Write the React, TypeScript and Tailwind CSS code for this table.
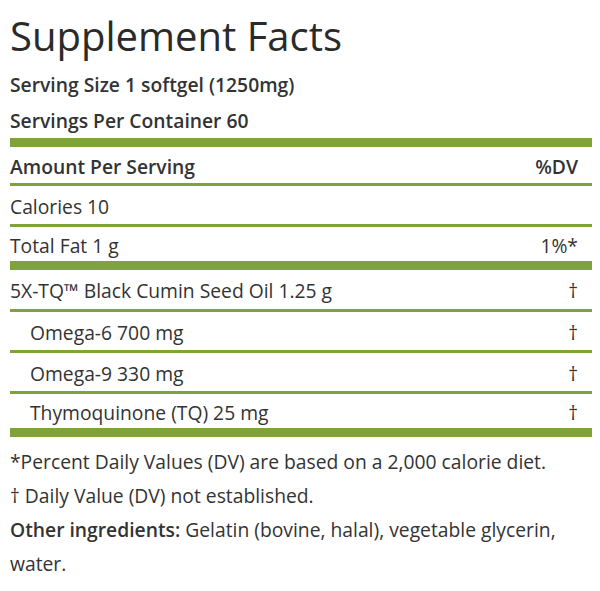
import React from 'react';

const rows = [
  { label: 'Calories 10', dv: '', indent: false, h: 'h-[41px] border-b-[3px]' },
  { label: 'Total Fat 1 g', dv: '1%*', indent: false, h: 'h-[43px] border-b-[9px]' },
  { label: '5X-TQ™ Black Cumin Seed Oil 1.25 g', dv: '†', indent: false, h: 'h-[42px] border-b-[3px]' },
  { label: 'Omega-6 700 mg', dv: '†', indent: true, h: 'h-[41px] border-b-[3px]' },
  { label: 'Omega-9 330 mg', dv: '†', indent: true, h: 'h-[41px] border-b-[3px]' },
  { label: 'Thymoquinone (TQ) 25 mg', dv: '†', indent: true, h: 'h-[43px] border-b-[9px]' },
];

export default function App() {
  return (
    <div
      className="w-[600px] h-[591px] bg-white text-[#333] pl-[10px] pr-[8px] pt-[13px]"
      style={{ fontFamily: '"Open Sans", "Noto Sans", sans-serif' }}
    >
      {/* Header */}
      <h1 className="text-[40px] leading-[46px] text-[#2a2a2a] font-normal">Supplement Facts</h1>
      <div className="mt-[14px] text-[19.3px] leading-[24px] font-semibold">Serving Size 1 softgel (1250mg)</div>
      <div className="mt-[12px] text-[19.3px] leading-[24px] font-semibold">Servings Per Container 60</div>
      <div className="mt-[5px] h-[9px] bg-[#7fa23a]" />

      {/* Table */}
      <div className="flex items-center justify-between h-[39px] pt-[4px] pr-[14px] border-b-[3px] border-[#7fa23a] text-[19.3px] font-semibold">
        <span>Amount Per Serving</span>
        <span>%DV</span>
      </div>
      {rows.map((r) => (
        <div
          key={r.label}
          className={'flex items-center justify-between pt-[4px] pr-[14px] text-[19.3px] border-[#7fa23a] ' + r.h}
        >
          <span className={r.indent ? 'pl-[20px]' : ''}>{r.label}</span>
          <span>{r.dv}</span>
        </div>
      ))}

      {/* Footnotes */}
      <div className="mt-[8px] text-[19.3px] leading-[34px]">
        <p>*Percent Daily Values (DV) are based on a 2,000 calorie diet.</p>
        <p>† Daily Value (DV) not established.</p>
        <p>
          <span className="font-semibold">Other ingredients:</span> Gelatin (bovine, halal), vegetable glycerin,
          water.
        </p>
      </div>
    </div>
  );
}
